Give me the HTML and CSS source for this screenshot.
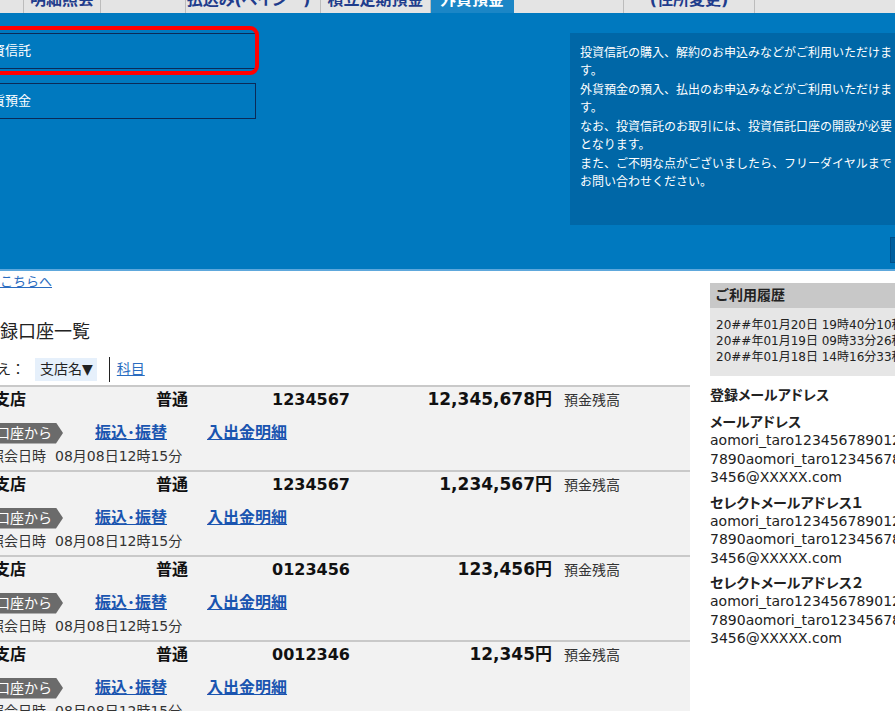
FILE: index.html
```html
<!DOCTYPE html>
<html lang="ja">
<head>
<meta charset="utf-8">
<title>外貨預金</title>
<link rel="stylesheet" href="styles.css">
</head>
<body>
<div class="page">
  <nav class="tabs">
    <a class="tab" href="#"><span></span></a>
    <a class="tab" href="#"><span>明細照会</span></a>
    <a class="tab" href="#"><span></span></a>
    <a class="tab tab-shift" href="#"><span>払込み(ペイジー)</span></a>
    <a class="tab" href="#"><span>積立定期預金</span></a>
    <a class="tab is-active" href="#"><span>外貨預金</span></a>
    <a class="tab" href="#"><span></span></a>
    <a class="tab" href="#"><span>(住所変更)</span></a>
    <a class="tab tab-rest" href="#"><span></span></a>
  </nav>

  <section class="hero">
    <div class="hero-menu">
      <div class="menu-item">
        <a class="menu-btn" href="#">投資信託</a>
        <span class="mark"></span>
      </div>
      <div class="menu-item">
        <a class="menu-btn" href="#">外貨預金</a>
      </div>
    </div>
    <div class="hero-info">
      <div class="info-box">
        <p>投資信託の購入、解約のお申込みなどがご利用いただけます。<br>外貨預金の預入、払出のお申込みなどがご利用いただけます。<br>なお、投資信託のお取引には、投資信託口座の開設が必要となります。<br>また、ご不明な点がございましたら、フリーダイヤルまでお問い合わせください。</p>
      </div>
      <a class="info-btn" href="#">詳細</a>
    </div>
  </section>

  <div class="content">
    <main class="main">
      <p class="notice"><a href="#">こちらへ</a></p>
      <h2 class="list-title">登録口座一覧</h2>
      <div class="sort">
        <span class="sort-label">並び替え：</span>
        <span class="sort-current">支店名▼</span>
        <a class="sort-link" href="#"><span>科目</span></a>
      </div>
      <ul class="accounts">
        <li class="account">
          <div class="acc-head">
            <span class="acc-branch">青森支店</span>
            <span class="acc-type">普通</span>
            <span class="acc-no">1234567</span>
            <span class="acc-amount">12,345,678円</span>
            <span class="acc-label">預金残高</span>
          </div>
          <div class="acc-actions">
            <span class="acc-tag">この口座から</span>
            <a class="acc-link acc-link-first" href="#">振込･振替</a>
            <a class="acc-link" href="#">入出金明細</a>
          </div>
          <div class="acc-date">最終照会日時<time>08月08日12時15分</time></div>
        </li>
        <li class="account">
          <div class="acc-head">
            <span class="acc-branch">青森支店</span>
            <span class="acc-type">普通</span>
            <span class="acc-no">1234567</span>
            <span class="acc-amount">1,234,567円</span>
            <span class="acc-label">預金残高</span>
          </div>
          <div class="acc-actions">
            <span class="acc-tag">この口座から</span>
            <a class="acc-link acc-link-first" href="#">振込･振替</a>
            <a class="acc-link" href="#">入出金明細</a>
          </div>
          <div class="acc-date">最終照会日時<time>08月08日12時15分</time></div>
        </li>
        <li class="account">
          <div class="acc-head">
            <span class="acc-branch">青森支店</span>
            <span class="acc-type">普通</span>
            <span class="acc-no">0123456</span>
            <span class="acc-amount">123,456円</span>
            <span class="acc-label">預金残高</span>
          </div>
          <div class="acc-actions">
            <span class="acc-tag">この口座から</span>
            <a class="acc-link acc-link-first" href="#">振込･振替</a>
            <a class="acc-link" href="#">入出金明細</a>
          </div>
          <div class="acc-date">最終照会日時<time>08月08日12時15分</time></div>
        </li>
        <li class="account">
          <div class="acc-head">
            <span class="acc-branch">青森支店</span>
            <span class="acc-type">普通</span>
            <span class="acc-no">0012346</span>
            <span class="acc-amount">12,345円</span>
            <span class="acc-label">預金残高</span>
          </div>
          <div class="acc-actions">
            <span class="acc-tag">この口座から</span>
            <a class="acc-link acc-link-first" href="#">振込･振替</a>
            <a class="acc-link" href="#">入出金明細</a>
          </div>
          <div class="acc-date">最終照会日時<time>08月08日12時15分</time></div>
        </li>
      </ul>
    </main>

    <aside class="side">
      <section class="history">
        <h3 class="history-title">ご利用履歴</h3>
        <ul class="history-list">
          <li>20##年01月20日 19時40分10秒</li>
          <li>20##年01月19日 09時33分26秒</li>
          <li>20##年01月18日 14時16分33秒</li>
        </ul>
      </section>
      <h3 class="mail-title">登録メールアドレス</h3>
      <dl class="mail">
        <dt>メールアドレス</dt>
        <dd>aomori_taro1234567890123456<br>7890aomori_taro1234567890123<br>3456@XXXXX.com</dd>
        <dt>セレクトメールアドレス１</dt>
        <dd>aomori_taro1234567890123456<br>7890aomori_taro1234567890123<br>3456@XXXXX.com</dd>
        <dt>セレクトメールアドレス２</dt>
        <dd>aomori_taro1234567890123456<br>7890aomori_taro1234567890123<br>3456@XXXXX.com</dd>
      </dl>
    </aside>
  </div>
</div>
</body>
</html>
```

FILE: styles.css
```css
* { box-sizing: border-box; margin: 0; padding: 0; }
html, body { overflow: hidden; width: 895px; height: 711px; }
body {
  font-family: "DejaVu Sans", "Noto Sans CJK JP", sans-serif;
  font-size: 14px;
  line-height: 1.3;
  color: #222;
  background: #fff;
}
a { color: inherit; text-decoration: none; }
ul { list-style: none; }

.page { margin-left: -50px; width: 1000px; }

/* tabs */
.tabs { display: flex; height: 13px; background: #e4e4e4; overflow: hidden; }
.tab {
  flex: none;
  height: 13px;
  border-right: 1px solid #bcbcbc;
  display: flex;
  align-items: flex-end;
  justify-content: center;
  padding-bottom: 5px;
  font-size: 16px;
  line-height: 16px;
  font-weight: bold;
  color: #1f3c8c;
  white-space: nowrap;
  font-feature-settings: "palt";
}
.tab:nth-child(1) { width: 74px; }
.tab:nth-child(2) { width: 77px; }
.tab:nth-child(3) { width: 85px; }
.tab:nth-child(4) { width: 135px; }
.tab:nth-child(5) { width: 110px; }
.tab:nth-child(6) { width: 83px; }
.tab:nth-child(7) { width: 110px; }
.tab:nth-child(8) { width: 131px; }
.tab-rest { flex: 1; border-right: 0; }
.tab-shift { padding-right: 9px; }
.tab.is-active { background: #1b86c6; color: #fff; border-right-color: #1b86c6; }

/* hero */
.hero {
  display: flex;
  height: 258px;
  padding-top: 20px;
  background: #0079bf;
  border-bottom: 2px solid #5ea8dc;
}
.hero-menu { flex: none; width: 306px; display: flex; flex-direction: column; gap: 14px; }
.menu-item { position: relative; }
.menu-btn {
  display: block;
  height: 36px;
  border: 1px solid #0b2a57;
  padding-left: 28px;
  color: #fff;
  font-size: 13px;
  line-height: 34px;
}
.mark {
  position: absolute;
  top: -7px; right: -3px; bottom: -6px; left: -8px;
  border: 4px solid #ff0000;
  border-radius: 9px;
  pointer-events: none;
}
.hero-info { flex: none; margin-left: 314px; width: 400px; }
.info-box {
  width: 336px;
  height: 192px;
  padding: 9.5px 10px 0;
  background: #0067a7;
  color: #fff;
  font-family: "Noto Sans CJK JP", sans-serif;
  font-size: 12px;
  line-height: 18.5px;
}
.info-btn {
  display: block;
  margin: 12px 0 0 320px;
  width: 80px;
  height: 26px;
  background: #00609f;
  border: 1px solid #004f88;
  padding-left: 30px;
  color: #0079bf;
  font-size: 12px;
  line-height: 24px;
}

/* content */
.content { display: flex; gap: 20px; }
.main { flex: none; width: 740px; }
.notice { margin-top: 2px; padding-left: 50px; font-size: 13px; line-height: 18px; }
.notice a { color: #2a6cc0; text-decoration: underline; }
.list-title {
  margin-top: 29px;
  padding-left: 32px;
  font-size: 18px;
  font-weight: normal;
  line-height: 24px;
  color: #222;
}
.sort { display: flex; align-items: center; height: 25px; margin-top: 13px; padding-left: 5px; font-size: 14px; }
.sort-label { line-height: 25px; }
.sort-current { margin-left: 10px; height: 23px; line-height: 23px; padding: 0 4px 0 5px; background: #e6f0fb; }
.sort-link {
  margin-left: 12px;
  height: 25px;
  line-height: 25px;
  padding-left: 7px;
  border-left: 1px solid #222;
  color: #2a6cc0;
}
.sort-link span { text-decoration: underline; }

.accounts { margin-top: 3px; }
.account {
  height: 85px;
  padding: 0 0 5px 12px;
  background: #f2f2f2;
  border-top: 2px solid #c9c9c9;
}
.acc-head {
  display: grid;
  grid-template-columns: 194px 116px 120px 160px auto;
  align-items: baseline;
  height: 24px;
  line-height: 24px;
  font-size: 16px;
  font-weight: bold;
  color: #111;
}
.acc-amount { font-size: 17px; text-align: right; }
.acc-label { padding-left: 12px; font-size: 14px; font-weight: normal; color: #333; }
.acc-actions { display: flex; align-items: center; height: 22px; margin-top: 11px; }
.acc-tag {
  height: 21px;
  line-height: 21px;
  padding: 0 11px 0 6px;
  background: #6b6b6b;
  color: #fff;
  font-size: 14px;
  clip-path: polygon(0 0, calc(100% - 7px) 0, 100% 50%, calc(100% - 7px) 100%, 0 100%);
}
.acc-link {
  margin-left: 40px;
  font-size: 16px;
  font-weight: bold;
  line-height: 22px;
  color: #1a55b0;
  text-decoration: underline;
}
.acc-link-first { margin-left: 32px; }
.acc-date { margin-top: 3px; font-size: 14px; line-height: 18px; color: #333; }
.acc-date time { margin-left: 9px; }

/* sidebar */
.side { flex: none; width: 240px; padding-top: 12px; }
.history-title {
  height: 25px;
  padding-left: 5px;
  background: #c8c8c8;
  font-size: 14px;
  font-weight: bold;
  line-height: 25px;
  color: #222;
}
.history-list { padding: 9px 6px 11px; background: #e6e6e6; font-size: 12px; line-height: 16px; color: #222; }
.mail-title { margin-top: 9px; font-size: 14px; font-weight: bold; line-height: 20px; font-feature-settings: "palt"; }
.mail dt { margin-top: 7px; font-size: 14px; font-weight: bold; line-height: 18px; font-feature-settings: "palt"; }
.mail dt:first-child { margin-top: 8px; }
.mail dd { font-size: 14px; line-height: 18.5px; color: #222; white-space: nowrap; }
```
